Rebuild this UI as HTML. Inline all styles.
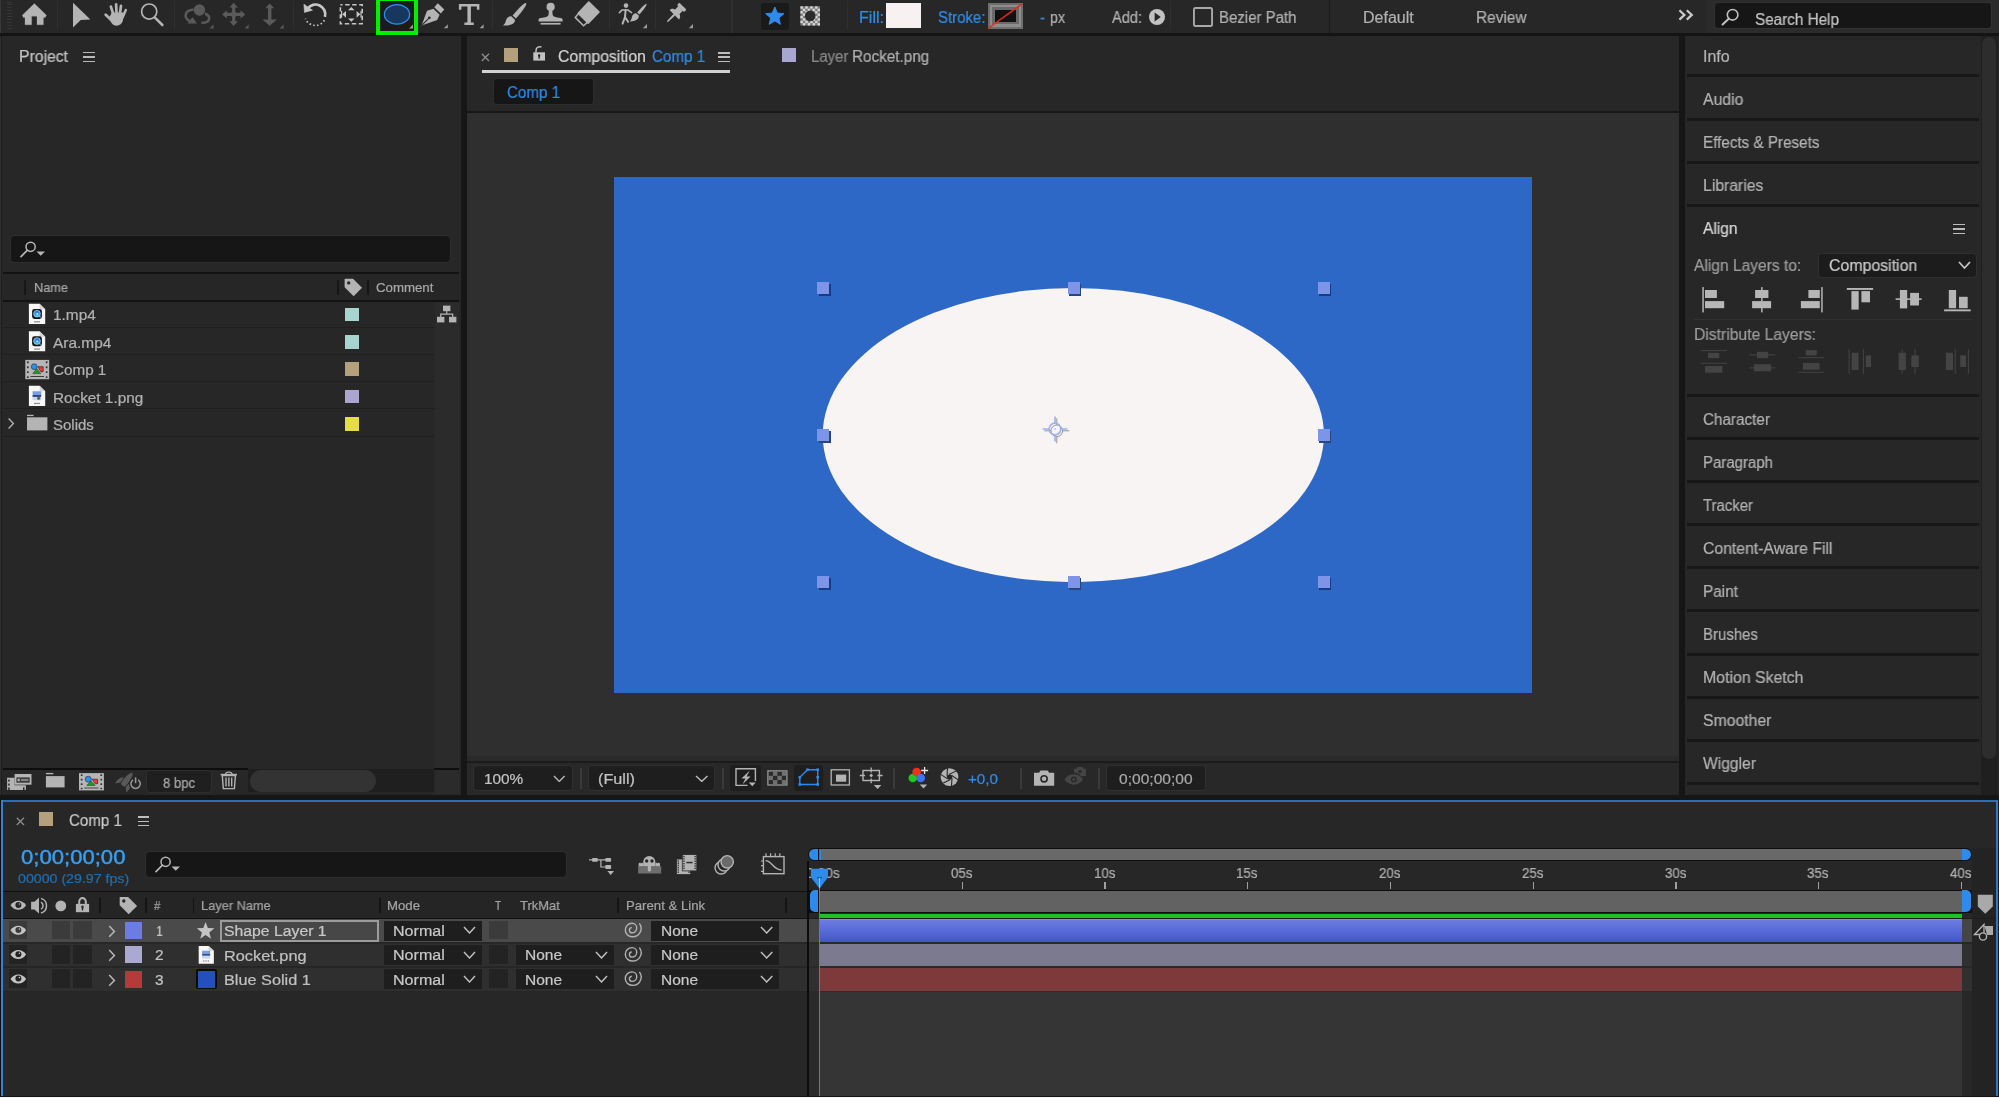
<!DOCTYPE html>
<html><head><meta charset="utf-8"><title>After Effects</title>
<style>
html,body{margin:0;padding:0;background:#161616;}
body{width:1999px;height:1098px;overflow:hidden;position:relative;font-family:"Liberation Sans",sans-serif;}
#r{position:absolute;left:0;top:0;width:1999px;height:1098px;overflow:hidden;background:#161616;}
#r div,#r span,#r svg{position:absolute;}
#r span{white-space:nowrap;line-height:1;transform-origin:0 0;will-change:transform;-webkit-text-stroke:0.22px currentColor;}
</style></head><body><div id="r">
<div style="left:0.00px;top:0.00px;width:1707.00px;height:33.00px;background:#272727;"></div>
<div style="left:1707.00px;top:0.00px;width:292.00px;height:33.00px;background:#2b2b2b;"></div>
<div style="left:0.00px;top:33.00px;width:1999.00px;height:3.00px;background:#141414;"></div>
<div style="left:7.00px;top:1.50px;width:4.50px;height:1.10px;background:#363636;"></div>
<div style="left:7.00px;top:4.40px;width:4.50px;height:1.10px;background:#363636;"></div>
<div style="left:7.00px;top:7.30px;width:4.50px;height:1.10px;background:#363636;"></div>
<div style="left:7.00px;top:10.20px;width:4.50px;height:1.10px;background:#363636;"></div>
<div style="left:7.00px;top:13.10px;width:4.50px;height:1.10px;background:#363636;"></div>
<div style="left:7.00px;top:16.00px;width:4.50px;height:1.10px;background:#363636;"></div>
<div style="left:7.00px;top:18.90px;width:4.50px;height:1.10px;background:#363636;"></div>
<div style="left:7.00px;top:21.80px;width:4.50px;height:1.10px;background:#363636;"></div>
<div style="left:7.00px;top:24.70px;width:4.50px;height:1.10px;background:#363636;"></div>
<div style="left:7.00px;top:27.60px;width:4.50px;height:1.10px;background:#363636;"></div>
<div style="left:57.00px;top:1.00px;width:1.00px;height:29.00px;background:#2f2f2f;"></div>
<div style="left:174.00px;top:1.00px;width:1.00px;height:29.00px;background:#2f2f2f;"></div>
<div style="left:292.50px;top:1.00px;width:1.00px;height:29.00px;background:#2f2f2f;"></div>
<div style="left:491.50px;top:1.00px;width:1.00px;height:29.00px;background:#2f2f2f;"></div>
<div style="left:609.00px;top:1.00px;width:1.00px;height:29.00px;background:#2f2f2f;"></div>
<div style="left:655.00px;top:1.00px;width:1.00px;height:29.00px;background:#2f2f2f;"></div>
<div style="left:847.00px;top:1.00px;width:1.00px;height:29.00px;background:#2f2f2f;"></div>
<div style="left:1170.00px;top:1.00px;width:1.00px;height:29.00px;background:#2f2f2f;"></div>
<div style="left:1329.00px;top:0.00px;width:1.20px;height:33.00px;background:#191919;"></div>
<div style="left:0.00px;top:0.00px;width:1.00px;height:33.00px;background:#383838;"></div>
<div style="left:0.00px;top:36.00px;width:1.00px;height:759.00px;background:#2f2f2f;"></div>
<div style="left:1.00px;top:36.00px;width:1.00px;height:759.00px;background:#1c1c1c;"></div>
<div style="left:2.00px;top:36.00px;width:459.00px;height:758.50px;background:#272727;"></div>
<div style="left:461.00px;top:36.00px;width:6.00px;height:759.00px;background:#161616;"></div>
<div style="left:467.00px;top:36.00px;width:1212.00px;height:74.50px;background:#272727;"></div>
<div style="left:467.00px;top:110.50px;width:1212.00px;height:2.00px;background:#171717;"></div>
<div style="left:467.00px;top:112.50px;width:1212.00px;height:643.50px;background:#2f2f2f;"></div>
<div style="left:467.00px;top:756.00px;width:1212.00px;height:4.50px;background:#2a2a2a;"></div>
<div style="left:467.00px;top:760.50px;width:1212.00px;height:2.00px;background:#1b1b1b;"></div>
<div style="left:467.00px;top:762.50px;width:1212.00px;height:32.00px;background:#282828;"></div>
<div style="left:1679.00px;top:36.00px;width:6.00px;height:759.00px;background:#161616;"></div>
<div style="left:1685.00px;top:36.00px;width:312.00px;height:759.00px;background:#272727;"></div>
<div style="left:1980.60px;top:36.00px;width:17.40px;height:759.00px;background:#1f1f1f;"></div>
<div style="left:1981.70px;top:37.00px;width:14.20px;height:722.00px;background:#2d2d2d;border-radius:7px;"></div>
<div style="left:1998.00px;top:36.00px;width:1.00px;height:759.00px;background:#282828;"></div>
<div style="left:0.00px;top:794.50px;width:1999.00px;height:5.50px;background:#161616;"></div>
<div style="left:0.00px;top:800.00px;width:1999.00px;height:298.00px;background:#272727;"></div>
<svg style="left:481.00px;top:52.50px;" width="9" height="9" viewBox="0 0 9 9"><path d="M0.8 0.8 L8 8 M8 0.8 L0.8 8" stroke="#8c8c8c" stroke-width="1.3" fill="none"/></svg>
<div style="left:503.70px;top:47.70px;width:14.00px;height:14.00px;background:#b4a07c;"></div>
<span style="left:558.40px;top:49.00px;font-size:16px;color:#d4d4d4;transform:scaleX(0.9881);">Composition</span>
<span style="left:651.50px;top:49.00px;font-size:16px;color:#2d8ceb;transform:scaleX(0.9482);">Comp 1</span>
<div style="left:718.40px;top:52.00px;width:11.60px;height:1.50px;background:#bdbdbd;"></div>
<div style="left:718.40px;top:56.30px;width:11.60px;height:1.50px;background:#bdbdbd;"></div>
<div style="left:718.40px;top:60.60px;width:11.60px;height:1.50px;background:#bdbdbd;"></div>
<div style="left:481.60px;top:70.30px;width:248.40px;height:2.50px;background:#d2d2d2;"></div>
<div style="left:781.60px;top:47.70px;width:14.40px;height:14.00px;background:#a9a7d0;"></div>
<span style="left:810.70px;top:49.00px;font-size:16px;color:#8a8a8a;transform:scaleX(0.9325);">Layer</span>
<span style="left:852.40px;top:49.00px;font-size:16px;color:#b0b0b0;transform:scaleX(0.9536);">Rocket.png</span>
<div style="left:494.00px;top:79.40px;width:99.00px;height:24.20px;background:#161616;border-radius:3px;box-shadow:0 0 0 1px #2c2c2c;"></div>
<span style="left:507.00px;top:85.00px;font-size:16px;color:#2d8ceb;transform:scaleX(0.9464);">Comp 1</span>
<div style="left:614.00px;top:176.50px;width:918.00px;height:516.00px;background:#2e68c6;"></div>
<svg style="left:614.00px;top:176.00px;" width="918" height="517" viewBox="0 0 918 517"><ellipse cx="459.3" cy="259.1" rx="250.6" ry="147.1" fill="#f9f4f4"/></svg>
<div style="left:818.50px;top:283.50px;width:12.00px;height:12.00px;background:#173e85;"></div>
<div style="left:817.00px;top:282.00px;width:12.00px;height:12.00px;background:#7e94e8;"></div>
<div style="left:818.50px;top:430.60px;width:12.00px;height:12.00px;background:#27467f;"></div>
<div style="left:817.00px;top:429.10px;width:12.00px;height:12.00px;background:#7e94e8;"></div>
<div style="left:818.50px;top:577.80px;width:12.00px;height:12.00px;background:#173e85;"></div>
<div style="left:817.00px;top:576.30px;width:12.00px;height:12.00px;background:#7e94e8;"></div>
<div style="left:1069.10px;top:283.50px;width:12.00px;height:12.00px;background:#27467f;"></div>
<div style="left:1067.60px;top:282.00px;width:12.00px;height:12.00px;background:#7e94e8;"></div>
<div style="left:1069.10px;top:577.80px;width:12.00px;height:12.00px;background:#27467f;"></div>
<div style="left:1067.60px;top:576.30px;width:12.00px;height:12.00px;background:#7e94e8;"></div>
<div style="left:1319.20px;top:283.50px;width:12.00px;height:12.00px;background:#173e85;"></div>
<div style="left:1317.70px;top:282.00px;width:12.00px;height:12.00px;background:#7e94e8;"></div>
<div style="left:1319.20px;top:430.60px;width:12.00px;height:12.00px;background:#27467f;"></div>
<div style="left:1317.70px;top:429.10px;width:12.00px;height:12.00px;background:#7e94e8;"></div>
<div style="left:1319.20px;top:577.80px;width:12.00px;height:12.00px;background:#173e85;"></div>
<div style="left:1317.70px;top:576.30px;width:12.00px;height:12.00px;background:#7e94e8;"></div>
<svg style="left:1040.00px;top:413.50px;" width="32" height="32" viewBox="0 0 32 32"><g fill="none" stroke-width="1.3"><g stroke="#8a8a8a" stroke-width="0.9" transform="translate(1.8,1.8)"><circle cx="15" cy="15" r="5.8"/><path d="M15 2.5V9.2M15 20.8V27.5M2.5 15H9.2M20.8 15H27.5"/></g><g stroke="#9fb2f2" stroke-width="1.7"><circle cx="15" cy="15" r="5.8"/><path d="M15 2.5V9.2M15 20.8V27.5M2.5 15H9.2M20.8 15H27.5"/></g><circle cx="15" cy="15" r="0.9" fill="#b4c2f5" stroke="none"/></g></svg>
<div style="left:474.40px;top:765.60px;width:97.60px;height:24.40px;background:#1e1e1e;border-radius:3px;box-shadow:0 0 0 1px #303030;"></div>
<span style="left:483.70px;top:771.00px;font-size:15px;color:#c2c2c2;transform:scaleX(1.0234);">100%</span>
<svg style="left:553.40px;top:774.60px;" width="12.600000000000023" height="7.399999999999977" viewBox="0 0 12.600000000000023 7.399999999999977"><path d="M1 1 L6.30 6.40 L11.60 1" stroke="#b8b8b8" stroke-width="1.45" fill="none"/></svg>
<div style="left:580.00px;top:767.50px;width:2.00px;height:21.00px;background:#3a3a3a;"></div>
<div style="left:588.70px;top:765.60px;width:125.00px;height:24.40px;background:#1e1e1e;border-radius:3px;box-shadow:0 0 0 1px #303030;"></div>
<span style="left:598.00px;top:771.00px;font-size:15px;color:#c2c2c2;transform:scaleX(1.0819);">(Full)</span>
<svg style="left:695.00px;top:774.60px;" width="13.5" height="7.399999999999977" viewBox="0 0 13.5 7.399999999999977"><path d="M1 1 L6.75 6.40 L12.50 1" stroke="#b8b8b8" stroke-width="1.45" fill="none"/></svg>
<div style="left:721.50px;top:767.50px;width:2.00px;height:21.00px;background:#3a3a3a;"></div>
<div style="left:730.00px;top:765.00px;width:30.60px;height:25.60px;background:#1e1e1e;border-radius:3px;"></div>
<div style="left:794.40px;top:765.00px;width:28.30px;height:25.60px;background:#1e1e1e;border-radius:3px;"></div>
<div style="left:893.00px;top:767.50px;width:2.00px;height:21.00px;background:#3a3a3a;"></div>
<span style="left:968.30px;top:771.00px;font-size:15px;color:#2d8ceb;transform:scaleX(1.0127);">+0,0</span>
<div style="left:1020.00px;top:767.50px;width:2.00px;height:21.00px;background:#3a3a3a;"></div>
<div style="left:1097.50px;top:767.50px;width:2.00px;height:21.00px;background:#3a3a3a;"></div>
<div style="left:1107.00px;top:765.50px;width:97.70px;height:24.80px;background:#1e1e1e;border-radius:3px;box-shadow:0 0 0 1px #303030;"></div>
<span style="left:1118.80px;top:771.00px;font-size:15px;color:#a8a8a8;transform:scaleX(1.0384);">0;00;00;00</span>
<div style="left:376.00px;top:0.00px;width:42.00px;height:35.30px;background:#00f000;"></div>
<div style="left:380.30px;top:0.50px;width:33.40px;height:30.50px;background:#1b1b1b;"></div>
<svg style="left:380.00px;top:0.00px;" width="34" height="31" viewBox="0 0 34 31"><ellipse cx="17" cy="14.4" rx="12.6" ry="9.8" fill="#17375f" stroke="#2d8ceb" stroke-width="1.3"/><path d="M33 24.5V28.5H29Z" fill="#9a9a9a"/></svg>
<div style="left:761.00px;top:2.70px;width:28.00px;height:27.00px;background:#1a1a1a;border-radius:3px;"></div>
<span style="left:859.00px;top:10.00px;font-size:16px;color:#2d8ceb;transform:scaleX(1.0048);">Fill:</span>
<div style="left:886.00px;top:3.30px;width:34.50px;height:24.70px;background:#f8f1f1;"></div>
<span style="left:938.00px;top:10.00px;font-size:16px;color:#2d8ceb;transform:scaleX(0.9365);">Stroke:</span>
<div style="left:987.70px;top:3.00px;width:35.30px;height:25.50px;background:#6e6e6e;"></div>
<div style="left:989.50px;top:4.80px;width:31.70px;height:21.90px;background:#8e8e8e;"></div>
<div style="left:992.00px;top:7.30px;width:26.70px;height:16.90px;background:#6a6a6a;"></div>
<div style="left:994.50px;top:9.80px;width:21.70px;height:11.90px;background:#111;"></div>
<svg style="left:987.00px;top:2.00px;" width="37" height="28" viewBox="0 0 37 28"><path d="M1 26.5 L35.5 1.5" stroke="#e6281e" stroke-width="1.5"/></svg>
<span style="left:1040.00px;top:10.00px;font-size:16px;color:#2d8ceb;transform:scaleX(0.9328);">-</span>
<span style="left:1050.00px;top:10.00px;font-size:16px;color:#b2b2b2;transform:scaleX(0.8886);">px</span>
<span style="left:1112.00px;top:10.00px;font-size:16px;color:#b2b2b2;transform:scaleX(0.9124);">Add:</span>
<svg style="left:1148.00px;top:8.00px;" width="18" height="18" viewBox="0 0 18 18"><circle cx="9" cy="9" r="8" fill="#c2c2c2"/><path d="M6.6 4.6 L12.8 9 L6.6 13.4Z" fill="#272727"/></svg>
<div style="left:1192.60px;top:7.00px;width:20.40px;height:20.00px;background:transparent;border-radius:2.5px;box-shadow:inset 0 0 0 1.9px #a8a8a8;"></div>
<span style="left:1218.50px;top:10.00px;font-size:16px;color:#b2b2b2;transform:scaleX(0.9369);">Bezier Path</span>
<span style="left:1363.00px;top:10.00px;font-size:16px;color:#b2b2b2;transform:scaleX(0.9937);">Default</span>
<span style="left:1476.00px;top:10.00px;font-size:16px;color:#b2b2b2;transform:scaleX(0.9623);">Review</span>
<svg style="left:1677.00px;top:8.00px;" width="19" height="14" viewBox="0 0 19 14"><path d="M2.4 2.2 L7.4 6.9 L2.4 11.6 M9.8 2.2 L14.8 6.9 L9.8 11.6" stroke="#cacaca" stroke-width="2.2" fill="none"/></svg>
<div style="left:1714.60px;top:3.40px;width:276.00px;height:25.10px;background:#161616;border-radius:3px;box-shadow:0 0 0 1px #323232;"></div>
<svg style="left:1721.00px;top:8.00px;" width="19" height="18" viewBox="0 0 19 18"><circle cx="11.6" cy="6.8" r="5.3" stroke="#c0c0c0" stroke-width="1.6" fill="none"/><path d="M8 10.6 L1.6 16.6" stroke="#c0c0c0" stroke-width="2" stroke-linecap="round"/></svg>
<span style="left:1755.00px;top:12.00px;font-size:16px;color:#c4c4c4;transform:scaleX(0.9537);">Search Help</span>
<span style="left:19.00px;top:49.00px;font-size:16px;color:#c4c4c4;transform:scaleX(0.9847);">Project</span>
<div style="left:83.00px;top:51.50px;width:12.00px;height:1.50px;background:#b8b8b8;"></div>
<div style="left:83.00px;top:56.10px;width:12.00px;height:1.50px;background:#b8b8b8;"></div>
<div style="left:83.00px;top:60.70px;width:12.00px;height:1.50px;background:#b8b8b8;"></div>
<div style="left:11.30px;top:236.30px;width:439.20px;height:26.20px;background:#161616;border-radius:4px;box-shadow:0 0 0 1px #2e2e2e;"></div>
<svg style="left:19.50px;top:240.50px;" width="27" height="17" viewBox="0 0 27 17"><circle cx="10.6" cy="5.8" r="4.6" stroke="#b6b6b6" stroke-width="1.5" fill="none"/><path d="M7.4 9.2 L1 15.6" stroke="#b6b6b6" stroke-width="1.7" stroke-linecap="round"/><path d="M16.5 10.5 H25 L20.75 14.8Z" fill="#b6b6b6"/></svg>
<div style="left:3.00px;top:272.00px;width:456.00px;height:2.00px;background:#121212;"></div>
<div style="left:3.00px;top:274.00px;width:456.00px;height:25.80px;background:#262626;"></div>
<div style="left:3.00px;top:299.80px;width:456.00px;height:1.80px;background:#121212;"></div>
<div style="left:24.00px;top:280.00px;width:2.00px;height:15.00px;background:#161616;"></div>
<div style="left:337.00px;top:280.00px;width:2.00px;height:15.00px;background:#161616;"></div>
<div style="left:367.00px;top:280.00px;width:2.00px;height:15.00px;background:#161616;"></div>
<span style="left:33.50px;top:281.00px;font-size:13px;color:#a8a8a8;transform:scaleX(0.9795);">Name</span>
<span style="left:375.60px;top:281.00px;font-size:13px;color:#a8a8a8;transform:scaleX(1.0185);">Comment</span>
<div style="left:435.00px;top:301.60px;width:24.00px;height:492.90px;background:#2b2b2b;"></div>
<div style="left:3.00px;top:326.50px;width:432.00px;height:1.10px;background:#202020;"></div>
<span style="left:53.30px;top:307.00px;font-size:15px;color:#b2b2b2;transform:scaleX(1.0264);">1.mp4</span>
<div style="left:345.00px;top:307.60px;width:13.80px;height:13.80px;background:#a7d4cf;"></div>
<div style="left:3.00px;top:353.80px;width:432.00px;height:1.10px;background:#202020;"></div>
<span style="left:53.00px;top:335.00px;font-size:15px;color:#b2b2b2;transform:scaleX(1.0282);">Ara.mp4</span>
<div style="left:345.00px;top:334.95px;width:13.80px;height:13.80px;background:#a7d4cf;"></div>
<div style="left:3.00px;top:381.10px;width:432.00px;height:1.10px;background:#202020;"></div>
<span style="left:53.00px;top:362.00px;font-size:15px;color:#b2b2b2;transform:scaleX(1.0152);">Comp 1</span>
<div style="left:345.00px;top:362.30px;width:13.80px;height:13.80px;background:#b4a07c;"></div>
<div style="left:3.00px;top:408.40px;width:432.00px;height:1.10px;background:#202020;"></div>
<span style="left:53.00px;top:390.00px;font-size:15px;color:#b2b2b2;transform:scaleX(1.0201);">Rocket 1.png</span>
<div style="left:345.00px;top:389.65px;width:13.80px;height:13.80px;background:#a9a7d0;"></div>
<div style="left:3.00px;top:435.70px;width:432.00px;height:1.10px;background:#202020;"></div>
<span style="left:53.00px;top:417.00px;font-size:15px;color:#b2b2b2;transform:scaleX(0.9982);">Solids</span>
<div style="left:345.00px;top:417.00px;width:13.80px;height:13.80px;background:#e6dc46;"></div>
<div style="left:3.00px;top:768.00px;width:245.00px;height:2.00px;background:#0e0e0e;"></div>
<div style="left:434.00px;top:768.00px;width:25.00px;height:2.00px;background:#0e0e0e;"></div>
<div style="left:248.00px;top:769.40px;width:186.00px;height:22.60px;background:#1f1f1f;"></div>
<div style="left:249.70px;top:770.00px;width:125.90px;height:21.50px;background:#333333;border-radius:11px;"></div>
<div style="left:147.00px;top:771.00px;width:64.00px;height:21.00px;background:#1f1f1f;border-radius:3px;box-shadow:0 0 0 1px #2e2e2e;"></div>
<span style="left:163.00px;top:776.00px;font-size:14px;color:#ababab;transform:scaleX(0.9349);">8 bpc</span>
<span style="left:1702.60px;top:49.00px;font-size:16px;color:#b2b2b2;transform:scaleX(0.9880);">Info</span>
<div style="left:1686.50px;top:74.40px;width:292.10px;height:3.00px;background:#171717;"></div>
<span style="left:1702.60px;top:92.00px;font-size:16px;color:#b2b2b2;transform:scaleX(0.9863);">Audio</span>
<div style="left:1686.50px;top:117.50px;width:292.10px;height:3.00px;background:#171717;"></div>
<span style="left:1702.60px;top:135.00px;font-size:16px;color:#b2b2b2;transform:scaleX(0.9510);">Effects &amp; Presets</span>
<div style="left:1686.50px;top:160.60px;width:292.10px;height:3.00px;background:#171717;"></div>
<span style="left:1702.60px;top:178.00px;font-size:16px;color:#b2b2b2;transform:scaleX(0.9844);">Libraries</span>
<div style="left:1686.50px;top:203.70px;width:292.10px;height:3.00px;background:#171717;"></div>
<span style="left:1702.50px;top:221.00px;font-size:16px;color:#d6d6d6;transform:scaleX(0.9691);">Align</span>
<div style="left:1953.00px;top:223.80px;width:12.00px;height:1.60px;background:#bdbdbd;"></div>
<div style="left:1953.00px;top:228.20px;width:12.00px;height:1.60px;background:#bdbdbd;"></div>
<div style="left:1953.00px;top:232.60px;width:12.00px;height:1.60px;background:#bdbdbd;"></div>
<span style="left:1694.00px;top:258.00px;font-size:16px;color:#9c9c9c;transform:scaleX(0.9726);">Align Layers to:</span>
<div style="left:1819.30px;top:253.70px;width:156.90px;height:23.30px;background:#1c1c1c;border-radius:3px;box-shadow:0 0 0 1px #2f2f2f;"></div>
<span style="left:1828.70px;top:258.00px;font-size:16px;color:#cacaca;transform:scaleX(0.9926);">Composition</span>
<svg style="left:1957.60px;top:261.00px;" width="14" height="9" viewBox="0 0 14 9"><path d="M1 1 L6.5 7 L12 1" stroke="#c8c8c8" stroke-width="1.7" fill="none"/></svg>
<div style="left:1694.00px;top:319.30px;width:279.00px;height:1.00px;background:#313131;"></div>
<span style="left:1694.00px;top:327.00px;font-size:16px;color:#9c9c9c;transform:scaleX(0.9801);">Distribute Layers:</span>
<div style="left:1686.50px;top:394.20px;width:292.10px;height:3.00px;background:#171717;"></div>
<span style="left:1702.60px;top:412.00px;font-size:16px;color:#b2b2b2;transform:scaleX(0.9524);">Character</span>
<div style="left:1686.50px;top:437.25px;width:292.10px;height:3.00px;background:#171717;"></div>
<span style="left:1702.60px;top:455.00px;font-size:16px;color:#b2b2b2;transform:scaleX(0.9355);">Paragraph</span>
<div style="left:1686.50px;top:480.30px;width:292.10px;height:3.00px;background:#171717;"></div>
<span style="left:1702.60px;top:498.00px;font-size:16px;color:#b2b2b2;transform:scaleX(0.9310);">Tracker</span>
<div style="left:1686.50px;top:523.35px;width:292.10px;height:3.00px;background:#171717;"></div>
<span style="left:1702.60px;top:541.00px;font-size:16px;color:#b2b2b2;transform:scaleX(0.9857);">Content-Aware Fill</span>
<div style="left:1686.50px;top:566.40px;width:292.10px;height:3.00px;background:#171717;"></div>
<span style="left:1702.60px;top:584.00px;font-size:16px;color:#b2b2b2;transform:scaleX(0.9567);">Paint</span>
<div style="left:1686.50px;top:609.45px;width:292.10px;height:3.00px;background:#171717;"></div>
<span style="left:1702.60px;top:627.00px;font-size:16px;color:#b2b2b2;transform:scaleX(0.9349);">Brushes</span>
<div style="left:1686.50px;top:652.50px;width:292.10px;height:3.00px;background:#171717;"></div>
<span style="left:1702.60px;top:670.00px;font-size:16px;color:#b2b2b2;transform:scaleX(0.9905);">Motion Sketch</span>
<div style="left:1686.50px;top:695.55px;width:292.10px;height:3.00px;background:#171717;"></div>
<span style="left:1702.60px;top:713.00px;font-size:16px;color:#b2b2b2;transform:scaleX(0.9862);">Smoother</span>
<div style="left:1686.50px;top:738.60px;width:292.10px;height:3.00px;background:#171717;"></div>
<span style="left:1702.60px;top:756.00px;font-size:16px;color:#b2b2b2;transform:scaleX(0.9753);">Wiggler</span>
<div style="left:1686.50px;top:781.65px;width:292.10px;height:3.00px;background:#171717;"></div>
<svg style="left:16.40px;top:817.00px;" width="9" height="9" viewBox="0 0 9 9"><path d="M0.8 0.8 L8 8 M8 0.8 L0.8 8" stroke="#8c8c8c" stroke-width="1.3" fill="none"/></svg>
<div style="left:38.70px;top:811.90px;width:14.40px;height:13.80px;background:#b4a07c;"></div>
<span style="left:69.10px;top:813.00px;font-size:16px;color:#c8c8c8;transform:scaleX(0.9429);">Comp 1</span>
<div style="left:137.50px;top:816.40px;width:11.90px;height:1.50px;background:#bdbdbd;"></div>
<div style="left:137.50px;top:820.60px;width:11.90px;height:1.50px;background:#bdbdbd;"></div>
<div style="left:137.50px;top:824.80px;width:11.90px;height:1.50px;background:#bdbdbd;"></div>
<span style="left:20.60px;top:848.00px;font-size:19.5px;color:#35a0f5;transform:scaleX(1.1331);-webkit-text-stroke:0.4px #35a0f5;">0;00;00;00</span>
<span style="left:17.50px;top:872.00px;font-size:13px;color:#1f6fb0;transform:scaleX(1.0911);">00000 (29.97 fps)</span>
<div style="left:146.20px;top:851.90px;width:419.80px;height:25.10px;background:#161616;border-radius:4px;box-shadow:0 0 0 1px #2e2e2e;"></div>
<svg style="left:154.50px;top:855.50px;" width="27" height="17" viewBox="0 0 27 17"><circle cx="10.6" cy="5.8" r="4.6" stroke="#b6b6b6" stroke-width="1.5" fill="none"/><path d="M7.4 9.2 L1 15.6" stroke="#b6b6b6" stroke-width="1.7" stroke-linecap="round"/><path d="M16.5 10.5 H25 L20.75 14.8Z" fill="#b6b6b6"/></svg>
<div style="left:3.00px;top:890.50px;width:805.00px;height:1.80px;background:#0f0f0f;"></div>
<div style="left:3.00px;top:892.30px;width:805.00px;height:25.20px;background:#252525;"></div>
<div style="left:3.00px;top:917.50px;width:805.00px;height:1.90px;background:#0f0f0f;"></div>
<div style="left:99.40px;top:898.00px;width:1.50px;height:14.50px;background:#141414;"></div>
<div style="left:145.00px;top:898.00px;width:1.50px;height:14.50px;background:#141414;"></div>
<div style="left:192.50px;top:898.00px;width:1.50px;height:14.50px;background:#141414;"></div>
<div style="left:379.40px;top:898.00px;width:1.50px;height:14.50px;background:#141414;"></div>
<div style="left:617.10px;top:898.00px;width:1.50px;height:14.50px;background:#141414;"></div>
<div style="left:785.20px;top:898.00px;width:1.50px;height:14.50px;background:#141414;"></div>
<span style="left:153.70px;top:900.00px;font-size:12px;color:#a4a4a4;transform:scaleX(0.9459);">#</span>
<span style="left:201.30px;top:899.00px;font-size:13px;color:#a4a4a4;transform:scaleX(0.9847);">Layer Name</span>
<span style="left:387.40px;top:899.00px;font-size:13px;color:#a4a4a4;transform:scaleX(1.0154);">Mode</span>
<span style="left:495.40px;top:899.00px;font-size:13px;color:#a4a4a4;transform:scaleX(0.7692);">T</span>
<span style="left:519.90px;top:899.00px;font-size:13px;color:#a4a4a4;transform:scaleX(0.9956);">TrkMat</span>
<span style="left:625.50px;top:899.00px;font-size:13px;color:#a4a4a4;transform:scaleX(1.0137);">Parent &amp; Link</span>
<div style="left:3.00px;top:919.40px;width:805.00px;height:22.60px;background:#4a4a4a;"></div>
<div style="left:8.70px;top:920.80px;width:18.50px;height:18.60px;background:#3b3b3b;"></div>
<div style="left:51.90px;top:920.80px;width:18.10px;height:18.60px;background:#3b3b3b;"></div>
<div style="left:72.90px;top:920.80px;width:19.00px;height:18.60px;background:#3b3b3b;"></div>
<div style="left:488.90px;top:920.80px;width:18.70px;height:18.60px;background:#3b3b3b;"></div>
<svg style="left:107.50px;top:925.00px;" width="8" height="13" viewBox="0 0 8 13"><path d="M1.2 1 L6.4 6.4 L1.2 11.8" stroke="#b8b8b8" stroke-width="1.5" fill="none"/></svg>
<div style="left:125.00px;top:922.10px;width:17.10px;height:17.00px;background:#6b7de0;"></div>
<span style="left:155.60px;top:923.00px;font-size:15.5px;color:#c4c4c4;transform:scaleX(0.8021);">1</span>
<div style="left:220.00px;top:919.70px;width:158.80px;height:22.10px;background:#474747;box-shadow:inset 0 0 0 2px #9c9c9c;"></div>
<span style="left:223.70px;top:923.00px;font-size:15.5px;color:#c8c8c8;transform:scaleX(1.0176);">Shape Layer 1</span>
<div style="left:384.40px;top:920.80px;width:97.50px;height:19.80px;background:#1e1e1e;"></div>
<span style="left:393.40px;top:923.00px;font-size:15.5px;color:#c8c8c8;transform:scaleX(1.0363);">Normal</span>
<svg style="left:462.90px;top:926.40px;" width="13.0" height="8.0" viewBox="0 0 13.0 8.0"><path d="M1 1 L6.50 7.00 L12.00 1" stroke="#c0c0c0" stroke-width="1.45" fill="none"/></svg>
<div style="left:651.30px;top:920.80px;width:127.80px;height:19.80px;background:#1e1e1e;"></div>
<span style="left:660.50px;top:923.00px;font-size:15.5px;color:#c8c8c8;transform:scaleX(0.9934);">None</span>
<svg style="left:759.70px;top:926.40px;" width="13.299999999999955" height="8.0" viewBox="0 0 13.299999999999955 8.0"><path d="M1 1 L6.65 7.00 L12.30 1" stroke="#c0c0c0" stroke-width="1.45" fill="none"/></svg>
<div style="left:3.00px;top:943.70px;width:805.00px;height:22.60px;background:#2f2f2f;"></div>
<div style="left:3.00px;top:966.30px;width:805.00px;height:1.70px;background:#262626;"></div>
<div style="left:8.70px;top:945.10px;width:18.50px;height:18.60px;background:#232323;"></div>
<div style="left:51.90px;top:945.10px;width:18.10px;height:18.60px;background:#232323;"></div>
<div style="left:72.90px;top:945.10px;width:19.00px;height:18.60px;background:#232323;"></div>
<div style="left:488.90px;top:945.10px;width:18.70px;height:18.60px;background:#232323;"></div>
<svg style="left:107.50px;top:949.30px;" width="8" height="13" viewBox="0 0 8 13"><path d="M1.2 1 L6.4 6.4 L1.2 11.8" stroke="#b8b8b8" stroke-width="1.5" fill="none"/></svg>
<div style="left:125.00px;top:946.40px;width:17.10px;height:17.00px;background:#aaa9d2;"></div>
<span style="left:155.00px;top:947.00px;font-size:15.5px;color:#c4c4c4;transform:scaleX(0.9881);">2</span>
<span style="left:223.70px;top:948.00px;font-size:15.5px;color:#c0c0c0;transform:scaleX(1.0532);">Rocket.png</span>
<div style="left:384.40px;top:945.10px;width:97.50px;height:19.80px;background:#1e1e1e;"></div>
<span style="left:393.40px;top:947.00px;font-size:15.5px;color:#c8c8c8;transform:scaleX(1.0363);">Normal</span>
<svg style="left:462.90px;top:950.70px;" width="13.0" height="8.0" viewBox="0 0 13.0 8.0"><path d="M1 1 L6.50 7.00 L12.00 1" stroke="#c0c0c0" stroke-width="1.45" fill="none"/></svg>
<div style="left:516.40px;top:945.10px;width:97.60px;height:19.80px;background:#1e1e1e;"></div>
<span style="left:525.20px;top:947.00px;font-size:15.5px;color:#c8c8c8;transform:scaleX(0.9934);">None</span>
<svg style="left:595.00px;top:950.70px;" width="13" height="8.0" viewBox="0 0 13 8.0"><path d="M1 1 L6.50 7.00 L12.00 1" stroke="#c0c0c0" stroke-width="1.45" fill="none"/></svg>
<div style="left:651.30px;top:945.10px;width:127.80px;height:19.80px;background:#1e1e1e;"></div>
<span style="left:660.50px;top:947.00px;font-size:15.5px;color:#c8c8c8;transform:scaleX(0.9934);">None</span>
<svg style="left:759.70px;top:950.70px;" width="13.299999999999955" height="8.0" viewBox="0 0 13.299999999999955 8.0"><path d="M1 1 L6.65 7.00 L12.30 1" stroke="#c0c0c0" stroke-width="1.45" fill="none"/></svg>
<div style="left:3.00px;top:968.00px;width:805.00px;height:22.50px;background:#2f2f2f;"></div>
<div style="left:3.00px;top:990.50px;width:805.00px;height:1.70px;background:#262626;"></div>
<div style="left:8.70px;top:969.40px;width:18.50px;height:18.50px;background:#232323;"></div>
<div style="left:51.90px;top:969.40px;width:18.10px;height:18.50px;background:#232323;"></div>
<div style="left:72.90px;top:969.40px;width:19.00px;height:18.50px;background:#232323;"></div>
<div style="left:488.90px;top:969.40px;width:18.70px;height:18.50px;background:#232323;"></div>
<svg style="left:107.50px;top:973.60px;" width="8" height="13" viewBox="0 0 8 13"><path d="M1.2 1 L6.4 6.4 L1.2 11.8" stroke="#b8b8b8" stroke-width="1.5" fill="none"/></svg>
<div style="left:125.00px;top:970.70px;width:17.10px;height:16.90px;background:#b53a3a;"></div>
<span style="left:155.00px;top:972.00px;font-size:15.5px;color:#c4c4c4;transform:scaleX(0.9881);">3</span>
<span style="left:223.70px;top:972.00px;font-size:15.5px;color:#c0c0c0;transform:scaleX(1.0497);">Blue Solid 1</span>
<div style="left:384.40px;top:969.40px;width:97.50px;height:19.70px;background:#1e1e1e;"></div>
<span style="left:393.40px;top:972.00px;font-size:15.5px;color:#c8c8c8;transform:scaleX(1.0363);">Normal</span>
<svg style="left:462.90px;top:975.00px;" width="13.0" height="8.0" viewBox="0 0 13.0 8.0"><path d="M1 1 L6.50 7.00 L12.00 1" stroke="#c0c0c0" stroke-width="1.45" fill="none"/></svg>
<div style="left:516.40px;top:969.40px;width:97.60px;height:19.70px;background:#1e1e1e;"></div>
<span style="left:525.20px;top:972.00px;font-size:15.5px;color:#c8c8c8;transform:scaleX(0.9934);">None</span>
<svg style="left:595.00px;top:975.00px;" width="13" height="8.0" viewBox="0 0 13 8.0"><path d="M1 1 L6.50 7.00 L12.00 1" stroke="#c0c0c0" stroke-width="1.45" fill="none"/></svg>
<div style="left:651.30px;top:969.40px;width:127.80px;height:19.70px;background:#1e1e1e;"></div>
<span style="left:660.50px;top:972.00px;font-size:15.5px;color:#c8c8c8;transform:scaleX(0.9934);">None</span>
<svg style="left:759.70px;top:975.00px;" width="13.299999999999955" height="8.0" viewBox="0 0 13.299999999999955 8.0"><path d="M1 1 L6.65 7.00 L12.30 1" stroke="#c0c0c0" stroke-width="1.45" fill="none"/></svg>
<div style="left:196.20px;top:969.40px;width:20.70px;height:20.00px;background:#0a0a0a;border-radius:2px;"></div>
<div style="left:197.70px;top:970.90px;width:17.70px;height:17.00px;background:#2450bd;"></div>
<div style="left:807.20px;top:861.00px;width:1.60px;height:235.00px;background:#0c0c0c;"></div>
<div style="left:809.00px;top:919.40px;width:11.00px;height:176.60px;background:#2a2a2a;"></div>
<div style="left:820.00px;top:919.40px;width:1142.40px;height:176.60px;background:#353535;"></div>
<div style="left:1962.40px;top:919.40px;width:9.60px;height:176.60px;background:#272727;"></div>
<div style="left:1972.00px;top:848.00px;width:24.00px;height:248.00px;background:#232323;"></div>
<div style="left:808.40px;top:848.30px;width:1164.00px;height:13.10px;background:#0e0e0e;border-radius:7px;"></div>
<div style="left:819.00px;top:849.40px;width:1143.40px;height:11.00px;background:#696969;"></div>
<div style="left:809.40px;top:849.40px;width:9.00px;height:11.00px;background:#2d8ceb;border-radius:6px 0 0 6px;"></div>
<div style="left:1962.40px;top:849.40px;width:9.00px;height:11.00px;background:#2d8ceb;border-radius:0 6px 6px 0;"></div>
<div style="left:819.60px;top:850.00px;width:1.40px;height:10.00px;background:#2d8ceb;"></div>
<div style="left:818.90px;top:882.00px;width:1.20px;height:7.00px;background:#a0a0a0;"></div>
<div style="left:808.7px;top:862px;width:40px;height:22px;overflow:hidden;"><span style="left:-3.2px;top:4px;font-size:14px;color:#b0b0b0;transform:scaleX(0.985);">0:00s</span></div>
<div style="left:961.65px;top:882.00px;width:1.20px;height:7.00px;background:#a0a0a0;"></div>
<span style="left:950.75px;top:866.00px;font-size:14px;color:#b0b0b0;transform:scaleX(0.9539);">05s</span>
<div style="left:1104.40px;top:882.00px;width:1.20px;height:7.00px;background:#a0a0a0;"></div>
<span style="left:1093.50px;top:866.00px;font-size:14px;color:#b0b0b0;transform:scaleX(0.9539);">10s</span>
<div style="left:1247.15px;top:882.00px;width:1.20px;height:7.00px;background:#a0a0a0;"></div>
<span style="left:1236.25px;top:866.00px;font-size:14px;color:#b0b0b0;transform:scaleX(0.9539);">15s</span>
<div style="left:1389.90px;top:882.00px;width:1.20px;height:7.00px;background:#a0a0a0;"></div>
<span style="left:1379.00px;top:866.00px;font-size:14px;color:#b0b0b0;transform:scaleX(0.9539);">20s</span>
<div style="left:1532.65px;top:882.00px;width:1.20px;height:7.00px;background:#a0a0a0;"></div>
<span style="left:1521.75px;top:866.00px;font-size:14px;color:#b0b0b0;transform:scaleX(0.9539);">25s</span>
<div style="left:1675.40px;top:882.00px;width:1.20px;height:7.00px;background:#a0a0a0;"></div>
<span style="left:1664.50px;top:866.00px;font-size:14px;color:#b0b0b0;transform:scaleX(0.9539);">30s</span>
<div style="left:1818.15px;top:882.00px;width:1.20px;height:7.00px;background:#a0a0a0;"></div>
<span style="left:1807.25px;top:866.00px;font-size:14px;color:#b0b0b0;transform:scaleX(0.9539);">35s</span>
<div style="left:1960.90px;top:882.00px;width:1.20px;height:7.00px;background:#a0a0a0;"></div>
<span style="left:1950.00px;top:866.00px;font-size:14px;color:#b0b0b0;transform:scaleX(0.9539);">40s</span>
<div style="left:809.00px;top:889.60px;width:1163.40px;height:23.60px;background:#0e0e0e;"></div>
<div style="left:819.00px;top:890.60px;width:1143.40px;height:21.80px;background:#626262;"></div>
<div style="left:809.90px;top:890.40px;width:7.70px;height:21.80px;background:#2d8ceb;border-radius:5px 0 0 5px;"></div>
<div style="left:1962.40px;top:890.40px;width:8.50px;height:21.80px;background:#2d8ceb;border-radius:0 5px 5px 0;"></div>
<div style="left:820.00px;top:913.60px;width:1142.40px;height:4.00px;background:#1fc11f;"></div>
<div style="left:809.00px;top:917.60px;width:1187.00px;height:1.70px;background:#1c1c1c;"></div>
<div style="left:809.00px;top:919.40px;width:11.00px;height:22.60px;background:#454545;"></div>
<div style="left:1962.40px;top:919.40px;width:9.60px;height:22.60px;background:#454545;"></div>
<div style="left:809.00px;top:943.70px;width:11.00px;height:22.60px;background:#303030;"></div>
<div style="left:1962.40px;top:943.70px;width:9.60px;height:22.60px;background:#303030;"></div>
<div style="left:809.00px;top:968.00px;width:11.00px;height:22.50px;background:#303030;"></div>
<div style="left:1962.40px;top:968.00px;width:9.60px;height:22.50px;background:#303030;"></div>
<div style="left:820.00px;top:919.40px;width:1142.40px;height:22.90px;background:#4f62d2;background:linear-gradient(#8f9bea 0,#6c7ce0 6%,#5a6cd8 45%,#4357c8 100%);"></div>
<div style="left:820.00px;top:942.30px;width:1142.40px;height:1.40px;background:#2a2a2a;"></div>
<div style="left:820.00px;top:943.70px;width:1142.40px;height:22.70px;background:#7b7a8f;"></div>
<div style="left:820.00px;top:966.40px;width:1142.40px;height:1.60px;background:#2a2a2a;"></div>
<div style="left:820.00px;top:968.00px;width:1142.40px;height:22.60px;background:#7e393a;"></div>
<div style="left:820.00px;top:990.60px;width:1142.40px;height:1.40px;background:#2c2c2c;"></div>
<svg style="left:810.00px;top:868.00px;" width="20" height="22" viewBox="0 0 20 22"><path d="M0.9 0.8 H18 V9.2 L9.55 20.6 L0.9 9.2Z" fill="#2d8ceb"/><path d="M7 9.8 H12" stroke="#1c4f86" stroke-width="1.2"/><path d="M9.55 10 V20.4" stroke="#c8c8c8" stroke-width="0.9"/></svg>
<div style="left:818.90px;top:888.40px;width:1.40px;height:208.60px;background:#2d8ceb;"></div>
<svg style="left:1977.00px;top:893.50px;" width="17" height="21" viewBox="0 0 17 21"><path d="M0.8 0.8 H15.8 V12.5 L8.3 19.8 L0.8 12.5Z" fill="#a9a9a9"/></svg>
<svg style="left:1973.00px;top:922.00px;" width="21" height="20" viewBox="0 0 21 20"><path d="M11.5 4 H20 V13 H14" fill="#a9a9a9"/><path d="M1.5 12.5 L11 2.5 V12.5Z" stroke="#b4b4b4" stroke-width="1.3" fill="none"/><circle cx="10" cy="14.5" r="3.6" stroke="#b4b4b4" stroke-width="1.4" fill="#212121"/></svg>
<div style="left:0.00px;top:800.00px;width:1.00px;height:298.00px;background:#101010;"></div>
<div style="left:1.00px;top:800.00px;width:1996.60px;height:1.90px;background:#2a6eba;"></div>
<div style="left:1.00px;top:800.00px;width:2.10px;height:298.00px;background:#2e82dc;"></div>
<div style="left:1995.80px;top:800.00px;width:1.80px;height:298.00px;background:#2b78cc;"></div>
<div style="left:1997.60px;top:795.00px;width:1.40px;height:303.00px;background:#1c1a19;"></div>
<div style="left:0.00px;top:1096.00px;width:1999.00px;height:1.00px;background:#151515;"></div>
<div style="left:0.00px;top:1097.00px;width:1999.00px;height:1.00px;background:#f4f4f4;"></div>
<svg style="left:0;top:0" width="1999" height="1098" viewBox="0 0 1999 1098"><path d="M34.4 3.6 L46.4 15.2 L45.2 17.5 H43.4 V24.8 H37 V16.2 H31.6 V24.8 H25 V17.5 H23.4 L22.3 15.2 Z" fill="#b4b4b4" stroke="#b4b4b4" stroke-width="0.3" stroke-linejoin="round"/><path d="M73 2.8 L90.4 19.5 L80.8 20 L73 27.4 Z" fill="#b4b4b4"/><g stroke="#b4b4b4" stroke-linecap="round" fill="none"><path d="M113.6 15 L110.9 6.6" stroke-width="2.7"/><path d="M116.6 14 L116.1 4.4" stroke-width="2.7"/><path d="M119.8 14.5 L121 5.8" stroke-width="2.7"/><path d="M122.6 17.5 L125.8 10" stroke-width="2.5"/><path d="M111.5 20.3 L105.7 14.8" stroke-width="2.8"/></g><path d="M111.8 12.5 H124 L122.8 21 C121 27 113 27 111 22 L109 18 Z" fill="#b4b4b4"/><circle cx="149.2" cy="11.6" r="7.6" stroke="#b4b4b4" stroke-width="1.7" fill="none"/><path d="M154.9 17.6 L162.4 25" stroke="#b4b4b4" stroke-width="2.5" stroke-linecap="round"/><circle cx="199.4" cy="10" r="5.7" fill="#5a5a5a"/><path d="M193.5 9.6 C184 10.5 183.5 18 190 21.3" stroke="#5a5a5a" stroke-width="2.5" fill="none"/><path d="M187.5 23.4 H197 L192.5 17 Z" fill="#5a5a5a"/><path d="M205 13.5 C211.5 16.5 210.5 23 201.5 22.8" stroke="#5a5a5a" stroke-width="2.5" fill="none"/><path d="M213.5 24.5 V28.5 H209.5Z" fill="#5a5a5a"/><g fill="#5a5a5a"><path d="M232.1 6.4 H235.29999999999998 V22.4 H232.1Z M225.7 12.8 H241.7 V16.0 H225.7Z"/><path d="M233.7 2.8000000000000007 L237.89999999999998 7.6000000000000005 H229.5Z M233.7 26.0 L237.89999999999998 21.2 H229.5Z M222.1 14.4 L226.89999999999998 10.2 V18.6Z M245.29999999999998 14.4 L240.5 10.2 V18.6Z"/><path d="M233.7 10.2 L237.89999999999998 14.4 L233.7 18.6 L229.5 14.4Z"/><path d="M248.6 24.5 V28.5 H244.6Z"/></g><g fill="#5a5a5a"><path d="M269.7 3.4 L274.2 8.2 H271.4 V19.4 H277 L269.7 25.8 L262.4 19.4 H268 V8.2 H265.2Z"/><path d="M283.6 24.5 V28.5 H279.6Z"/></g><path d="M307.55 8.74 A9.7 9.7 0 0 1 324.9 16.8" stroke="#c6c6c6" stroke-width="2.7" fill="none"/><path d="M303.9 4.2 L304.5 12.4 L312.5 10.2Z" fill="#c6c6c6" stroke="#c6c6c6" stroke-width="0.6" stroke-linejoin="round"/><path d="M324.4 20.3 A10.6 10.6 0 0 1 305.4 18.6" stroke="#c6c6c6" stroke-width="1.7" stroke-dasharray="1.5 2.3" fill="none"/><rect x="340.4" y="4.8" width="21.8" height="19" fill="none" stroke="#c6c6c6" stroke-width="1.6" stroke-dasharray="4.4 2.6" stroke-dashoffset="2.2"/><g fill="#c6c6c6"><path d="M351.3 7 L354.6 10.2 H348Z M351.3 21.8 L354.6 18.6 H348Z M342.2 14.3 L346 10.9 V17.7Z M360.4 14.3 L356.6 10.9 V17.7Z"/><rect x="341" y="11" width="1.2" height="6.6"/><rect x="360.4" y="11" width="1.2" height="6.6"/></g><path d="M421.6 25.4 L427 10.8 L433.4 8.8 L439.6 14.8 L437.2 20 Z" fill="#b4b4b4"/><path d="M422.2 24.8 L429 18.2" stroke="#272727" stroke-width="1.1"/><circle cx="429.4" cy="17.8" r="1.3" fill="#272727"/><path d="M434.3 7.2 L437.8 3.2 L444.3 9.5 L440.8 13.5Z" fill="#b4b4b4"/><path d="M447.8 24.3 V28.3 H443.8Z" fill="#9a9a9a"/><path d="M458.9 4 H479.4 V9.8 H476.9 V6.6 H470.9 V22.4 H473.8 V25 H464.4 V22.4 H467.4 V6.6 H461.4 V9.8 H458.9Z" fill="#b4b4b4"/><path d="M483.6 24.3 V28.3 H479.6Z" fill="#9a9a9a"/><path d="M526.2 3 C527.5 5 520 14 515.8 18.6 L512.6 15.6 C516 11 524 2.6 526.2 3Z" fill="#b4b4b4"/><path d="M511.6 16.6 L514.9 19.7 C515.5 24 509 26.2 503 25.4 C506 23.5 505.5 20 507.2 18 C508.4 16.6 510.2 16 511.6 16.6Z" fill="#b4b4b4"/><circle cx="550.6" cy="6.9" r="4.1" fill="#b4b4b4"/><path d="M549 9 H552.2 L552.6 14.5 C553 16.8 556 17.6 560.5 17.9 C562.2 18 562.6 18.8 562.6 19.8 V21.5 H538.6 V19.8 C538.6 18.8 539 18 540.7 17.9 C545.2 17.6 548.2 16.8 548.6 14.5Z" fill="#b4b4b4"/><rect x="540.6" y="22.9" width="20" height="1.7" fill="#b4b4b4"/><path d="M588.8 2 L599 12 L588.2 23.2 L578.2 13.2Z" fill="#b4b4b4" stroke="#b4b4b4" stroke-width="1.6" stroke-linejoin="round"/><path d="M578.6 13.6 L575.2 17.4 L583.6 25.8 L588 21.6" fill="none" stroke="#b4b4b4" stroke-width="1.5" stroke-linejoin="round"/><circle cx="626" cy="5.6" r="2.3" fill="#b4b4b4"/><g stroke="#b4b4b4" fill="none" stroke-linecap="round"><path d="M619.4 12.6 L622 10 H628 L631.6 12.6" stroke-width="1.6"/><path d="M625.6 10 L625 17 L622.6 23.6 M625 17 L628 21.8" stroke-width="2"/></g><path d="M646.6 3.8 C647.4 5.2 642 11.6 639.4 14.6 L637.2 12.6 C639.6 9.4 645.2 3.4 646.6 3.8Z" fill="#b4b4b4"/><path d="M636.4 13.4 L638.8 15.6 C639.4 19.4 634.4 21.8 629.6 21.4 C632.2 19.6 631.4 16.8 633 14.8 C634 13.6 635.4 13 636.4 13.4Z" fill="#b4b4b4"/><path d="M647 24 V28.2 H642.8Z" fill="#9a9a9a"/><g transform="translate(675.4 13.6) rotate(45)" fill="#b4b4b4"><rect x="-5" y="-10.6" width="10" height="3.4" rx="0.8"/><rect x="-3.2" y="-7.6" width="6.4" height="6.6"/><path d="M-6.6 1.6 C-6.6 -1.4 -4 -2.4 -3.2 -2.4 H3.2 C4 -2.4 6.6 -1.4 6.6 1.6Z"/><path d="M-1.2 1.6 H1.2 L0.7 10.8 L0 12 L-0.7 10.8Z"/></g><path d="M693 24 V28.2 H688.8Z" fill="#9a9a9a"/><polygon points="774.80,7.00 777.33,13.12 783.93,13.63 778.89,17.93 780.44,24.37 774.80,20.90 769.16,24.37 770.71,17.93 765.67,13.63 772.27,13.12" fill="#2d8ceb" stroke="#2d8ceb" stroke-width="1" stroke-linejoin="round"/><rect x="800.4" y="6.3" width="19.6" height="19.2" fill="#7c7c7c"/><g fill="#d6d6d6"><rect x="800.40" y="6.30" width="2.45" height="2.4"/><rect x="800.40" y="11.10" width="2.45" height="2.4"/><rect x="800.40" y="15.90" width="2.45" height="2.4"/><rect x="800.40" y="20.70" width="2.45" height="2.4"/><rect x="802.85" y="8.70" width="2.45" height="2.4"/><rect x="802.85" y="13.50" width="2.45" height="2.4"/><rect x="802.85" y="18.30" width="2.45" height="2.4"/><rect x="802.85" y="23.10" width="2.45" height="2.4"/><rect x="805.30" y="6.30" width="2.45" height="2.4"/><rect x="805.30" y="11.10" width="2.45" height="2.4"/><rect x="805.30" y="15.90" width="2.45" height="2.4"/><rect x="805.30" y="20.70" width="2.45" height="2.4"/><rect x="807.75" y="8.70" width="2.45" height="2.4"/><rect x="807.75" y="13.50" width="2.45" height="2.4"/><rect x="807.75" y="18.30" width="2.45" height="2.4"/><rect x="807.75" y="23.10" width="2.45" height="2.4"/><rect x="810.20" y="6.30" width="2.45" height="2.4"/><rect x="810.20" y="11.10" width="2.45" height="2.4"/><rect x="810.20" y="15.90" width="2.45" height="2.4"/><rect x="810.20" y="20.70" width="2.45" height="2.4"/><rect x="812.65" y="8.70" width="2.45" height="2.4"/><rect x="812.65" y="13.50" width="2.45" height="2.4"/><rect x="812.65" y="18.30" width="2.45" height="2.4"/><rect x="812.65" y="23.10" width="2.45" height="2.4"/><rect x="815.10" y="6.30" width="2.45" height="2.4"/><rect x="815.10" y="11.10" width="2.45" height="2.4"/><rect x="815.10" y="15.90" width="2.45" height="2.4"/><rect x="815.10" y="20.70" width="2.45" height="2.4"/><rect x="817.55" y="8.70" width="2.45" height="2.4"/><rect x="817.55" y="13.50" width="2.45" height="2.4"/><rect x="817.55" y="18.30" width="2.45" height="2.4"/><rect x="817.55" y="23.10" width="2.45" height="2.4"/></g><circle cx="810.2" cy="15.9" r="5.3" fill="#2b2b2b"/></svg>
<div style="left:730.50px;top:0.00px;width:2.50px;height:33.00px;background:#2f2f2f;"></div>
<svg style="left:0;top:0" width="1999" height="1098" viewBox="0 0 1999 1098"><rect x="533.3" y="52.3" width="11.7" height="8.3" fill="#c2c2c2"/><path d="M536 52.6 V50.4 C536 47 539.5 46.2 541.4 47" stroke="#c2c2c2" stroke-width="1.5" fill="none"/><path d="M539.15 54.2 C540.6 54.2 540.6 56 539.9 56.8 L539.6 59 H538.7 L538.4 56.8 C537.7 56 537.7 54.2 539.15 54.2Z" fill="#222"/><defs><linearGradient id="qt" x1="0" y1="0" x2="0" y2="1"><stop offset="0" stop-color="#2a62ee"/><stop offset="1" stop-color="#2ad4f6"/></linearGradient></defs><path d="M28.9 303.8 H39.599999999999994 L45.2 309.3 V324.0 H28.9Z" fill="#f7f7f7"/><path d="M39.599999999999994 303.8 V309.3 H45.2Z" fill="#d4d4d4"/><rect x="32.1" y="308.90000000000003" width="9.8" height="10" rx="2.4" fill="#17171a"/><circle cx="37" cy="313.7" r="3.4" fill="url(#qt)" stroke="#cfe0f6" stroke-width="0.6"/><circle cx="37.3" cy="314.0" r="0.9" fill="#d8f0fb"/><path d="M38.6 315.40000000000003 L40.6 317.2" stroke="#8fb4d8" stroke-width="1.2"/><rect x="34" y="321.0" width="6" height="1.5" fill="#a0a0a0"/><path d="M28.9 331.15000000000003 H39.599999999999994 L45.2 336.65000000000003 V351.35 H28.9Z" fill="#f7f7f7"/><path d="M39.599999999999994 331.15000000000003 V336.65000000000003 H45.2Z" fill="#d4d4d4"/><rect x="32.1" y="336.25000000000006" width="9.8" height="10" rx="2.4" fill="#17171a"/><circle cx="37" cy="341.05" r="3.4" fill="url(#qt)" stroke="#cfe0f6" stroke-width="0.6"/><circle cx="37.3" cy="341.35" r="0.9" fill="#d8f0fb"/><path d="M38.6 342.75000000000006 L40.6 344.55" stroke="#8fb4d8" stroke-width="1.2"/><rect x="34" y="348.35" width="6" height="1.5" fill="#a0a0a0"/><rect x="25.3" y="359.9" width="23.9" height="19.3" fill="#b6b6b6"/><rect x="27.00" y="361.30" width="1.70" height="1.90" rx="0.5" fill="#333"/><rect x="45.80" y="361.30" width="1.70" height="1.90" rx="0.5" fill="#333"/><rect x="27.00" y="366.25" width="1.70" height="1.90" rx="0.5" fill="#333"/><rect x="45.80" y="366.25" width="1.70" height="1.90" rx="0.5" fill="#333"/><rect x="27.00" y="371.20" width="1.70" height="1.90" rx="0.5" fill="#333"/><rect x="45.80" y="371.20" width="1.70" height="1.90" rx="0.5" fill="#333"/><rect x="27.00" y="376.15" width="1.70" height="1.90" rx="0.5" fill="#333"/><rect x="45.80" y="376.15" width="1.70" height="1.90" rx="0.5" fill="#333"/><rect x="30.40" y="376.00" width="13.60" height="1.00" fill="#3c3c3c"/><path d="M37.80 366.70 H43.20 V371.70 H40.80Z" fill="#f23a3a" stroke="#2a2a2a" stroke-width="0.7"/><circle cx="34.20" cy="366.70" r="2.90" fill="#2f8ef0" stroke="#2a2a2a" stroke-width="0.6"/><path d="M36.70 368.70 L40.80 373.60 H32.80Z" fill="#14a018" stroke="#2a2a2a" stroke-width="0.5"/><path d="M28.9 385.85 H39.599999999999994 L45.2 391.35 V406.05 H28.9Z" fill="#f7f7f7"/><path d="M39.599999999999994 385.85 V391.35 H45.2Z" fill="#d4d4d4"/><rect x="32.6" y="391.25" width="8.6" height="4.2" fill="#7a9ee6"/><rect x="32.6" y="395.05" width="8.6" height="2" fill="#2b3c78"/><rect x="32.6" y="396.85" width="8.6" height="3.4" fill="#c9d6f2"/><circle cx="38.6" cy="398.25" r="1.6" fill="#333" opacity="0.75"/><rect x="34" y="402.85" width="6" height="1.2" fill="#8c8c8c"/><rect x="27" y="414.8" width="6.6" height="1.3" fill="#b4b4b4"/><rect x="27" y="417.3" width="20.4" height="13.1" fill="#b4b4b4"/><path d="M8.6 418.6 L13.4 423.6 L8.6 428.6" stroke="#b0b0b0" stroke-width="1.4" fill="none"/><g transform="translate(344.6 278.8) scale(1.0)"><path d="M0 0 H8.4 L17.4 9 L9 17.4 L0 8.4Z" fill="#b4b4b4"/><circle cx="4.1" cy="4.1" r="1.7" fill="#272727"/></g><g fill="#b4b4b4"><rect x="443" y="305.6" width="7.4" height="5.6"/><rect x="437" y="316.8" width="7.4" height="5.6"/><rect x="449" y="316.8" width="7.4" height="5.6"/></g><path d="M446.7 311 V314.2 M440.7 317 V314.2 H452.7 V317" stroke="#b4b4b4" stroke-width="1.2" fill="none"/><path d="M7.1 777.8 H14.6 V785.2 H25.9 V790.1 H7.1Z" fill="#b4b4b4"/><rect x="8.2" y="779.6" width="1.5" height="2" fill="#272727"/><rect x="8.2" y="783.6" width="1.5" height="2" fill="#272727"/><rect x="8.2" y="787.4" width="1.5" height="2.7" fill="#272727"/><rect x="23" y="787.4" width="1.5" height="2.7" fill="#272727"/><rect x="14.6" y="774" width="16.9" height="10.7" fill="#b4b4b4"/><rect x="16.4" y="777.4" width="13.3" height="5.3" fill="#3a3a3a"/><rect x="17.6" y="778.8" width="2.2" height="2.4" fill="#b4b4b4"/><rect x="21" y="779.4" width="7.4" height="1.2" fill="#b4b4b4"/><rect x="45.9" y="772.9" width="7.4" height="1.4" fill="#b4b4b4"/><rect x="45.9" y="776.1" width="18.7" height="11.3" fill="#b4b4b4"/><rect x="79" y="773.1" width="24.9" height="17.3" fill="#b6b6b6"/><rect x="80.77" y="774.35" width="1.77" height="1.70" rx="0.5" fill="#333"/><rect x="100.36" y="774.35" width="1.77" height="1.70" rx="0.5" fill="#333"/><rect x="80.77" y="778.79" width="1.77" height="1.70" rx="0.5" fill="#333"/><rect x="100.36" y="778.79" width="1.77" height="1.70" rx="0.5" fill="#333"/><rect x="80.77" y="783.23" width="1.77" height="1.70" rx="0.5" fill="#333"/><rect x="100.36" y="783.23" width="1.77" height="1.70" rx="0.5" fill="#333"/><rect x="80.77" y="787.67" width="1.77" height="1.70" rx="0.5" fill="#333"/><rect x="100.36" y="787.67" width="1.77" height="1.70" rx="0.5" fill="#333"/><rect x="84.31" y="787.53" width="14.17" height="0.90" fill="#3c3c3c"/><path d="M92.02 779.20 H97.65 V783.68 H95.15Z" fill="#f23a3a" stroke="#2a2a2a" stroke-width="0.7"/><circle cx="88.27" cy="779.20" r="3.02" fill="#2f8ef0" stroke="#2a2a2a" stroke-width="0.6"/><path d="M90.88 780.99 L95.15 785.38 H86.81Z" fill="#14a018" stroke="#2a2a2a" stroke-width="0.5"/><g transform="translate(126.5 780.5) rotate(38)" fill="#585858"><path d="M0 -10 C3.4 -6.5 3.4 3 2.4 6.4 H-2.4 C-3.4 3 -3.4 -6.5 0 -10Z"/><path d="M-4 -1 C-7.5 2 -8 6 -7 9.4 L-3.6 5.5Z"/><path d="M4 -1 C7.5 2 8 6 7 9.4 L3.6 5.5Z"/></g><circle cx="135.6" cy="783.7" r="4.7" stroke="#272727" stroke-width="4" fill="#272727"/><path d="M133 779.8 A4.7 4.7 0 1 0 138.2 779.8" stroke="#9a9a9a" stroke-width="1.5" fill="none"/><path d="M135.6 777.4 V783.2" stroke="#9a9a9a" stroke-width="1.5"/><path d="M222.3 775.6 H235.4 L234.4 788.6 H223.3Z" stroke="#b4b4b4" stroke-width="1.4" fill="none"/><path d="M220.6 774.6 H237" stroke="#b4b4b4" stroke-width="1.5"/><path d="M225.6 774 C225.6 771.4 232 771.4 232 774" stroke="#b4b4b4" stroke-width="1.3" fill="none"/><path d="M226 777.6 V786.4 M228.85 777.6 V786.4 M231.7 777.6 V786.4" stroke="#b4b4b4" stroke-width="1.4"/></svg>
<svg style="left:0;top:0" width="1999" height="1098" viewBox="0 0 1999 1098"><path d="M747.5 785.4 H736 V768.8 H755.4 V781" stroke="#b4b4b4" stroke-width="1.4" fill="none"/><path d="M749.8 770.6 L741.4 778.6 H745.4 L742.6 784.2 L750.6 776.6 H746.6Z" fill="#b4b4b4"/><path d="M748.8 782.4 H755.8 L752.3 786.2Z" fill="#b4b4b4"/><rect x="767.9" y="770.9" width="19" height="14.1" fill="#2a2a2a" stroke="#a2a2a2" stroke-width="1.2"/><rect x="768.50" y="775.80" width="4.45" height="4.3" fill="#707070"/><rect x="772.95" y="771.50" width="4.45" height="4.3" fill="#707070"/><rect x="772.95" y="780.10" width="4.45" height="4.3" fill="#707070"/><rect x="777.40" y="775.80" width="4.45" height="4.3" fill="#707070"/><rect x="781.85" y="771.50" width="4.45" height="4.3" fill="#707070"/><rect x="781.85" y="780.10" width="4.45" height="4.3" fill="#707070"/><path d="M807.5 769.7 L817.7 769.7 L817.7 784.5 L799.8 784.5 L799.8 777.3Z" stroke="#2d8ceb" stroke-width="1.4" fill="none"/><rect x="806.2" y="768.4000000000001" width="2.6" height="2.6" fill="#2d8ceb"/><rect x="816.4000000000001" y="768.4000000000001" width="2.6" height="2.6" fill="#2d8ceb"/><rect x="816.4000000000001" y="783.2" width="2.6" height="2.6" fill="#2d8ceb"/><rect x="798.5" y="783.2" width="2.6" height="2.6" fill="#2d8ceb"/><rect x="798.5" y="776.0" width="2.6" height="2.6" fill="#2d8ceb"/><rect x="816.4000000000001" y="776.0" width="2.6" height="2.6" fill="#2d8ceb"/><rect x="831.2" y="769.8" width="18.2" height="15.2" stroke="#b4b4b4" stroke-width="1.3" fill="none"/><rect x="836" y="774.6" width="10.2" height="7.1" fill="#b4b4b4"/><rect x="863" y="770.5" width="16.4" height="10" stroke="#b4b4b4" stroke-width="1.4" fill="none"/><path d="M871.2 767.6 V772.6 M871.2 778.4 V783.2 M859.8 775.5 H865 M877.4 775.5 H882.6" stroke="#b4b4b4" stroke-width="1.3"/><path d="M871.2 773.6 L873 775.5 L871.2 777.4 L869.4 775.5Z" fill="#b4b4b4"/><path d="M873.8 785 H881.4 L877.6 789Z" fill="#b4b4b4"/><circle cx="912.8" cy="778" r="4.3" fill="#1ec81e"/><circle cx="916.6" cy="772" r="4.3" fill="#f2301a"/><circle cx="920.8" cy="778" r="4.3" fill="#3f70f6"/><path d="M924.6 767 V774 M921.1 770.5 H928.1" stroke="#e2e2e2" stroke-width="1.3"/><path d="M919.8 784.5 H927.2 L923.5 788.6Z" fill="#b4b4b4"/><circle cx="949.5" cy="777.1" r="8.9" fill="#b4b4b4"/><circle cx="949.5" cy="777.1" r="2.7" fill="#282828"/><path d="M951.98 777.87 L951.51 786.08" stroke="#282828" stroke-width="1.1"/><path d="M950.08 779.64 L942.73 783.33" stroke="#282828" stroke-width="1.1"/><path d="M947.59 778.87 L940.72 774.36" stroke="#282828" stroke-width="1.1"/><path d="M947.02 776.33 L947.49 768.12" stroke="#282828" stroke-width="1.1"/><path d="M948.92 774.56 L956.27 770.87" stroke="#282828" stroke-width="1.1"/><path d="M951.41 775.33 L958.28 779.84" stroke="#282828" stroke-width="1.1"/><path d="M1034 772.8 H1039 L1040.6 770.4 H1047.6 L1049.2 772.8 H1054.2 V785.8 H1034Z" fill="#b4b4b4"/><circle cx="1044.1" cy="778.8" r="3.9" fill="#282828"/><circle cx="1044.1" cy="778.8" r="2.3" fill="#b4b4b4"/><g fill="#454545"><path d="M1064.4 779.6 C1069 772.6 1078.6 772.6 1083.2 779.6 C1078.6 786.4 1069 786.4 1064.4 779.6Z"/><path d="M1074 768.8 H1076.4 L1077.4 767 H1082.4 L1083.4 768.8 H1086 V776 H1081 C1079 773.4 1076 772.6 1074 772.4Z"/></g><circle cx="1073.8" cy="779.4" r="2.9" fill="#282828"/><circle cx="1073.8" cy="779.4" r="1.5" fill="#454545"/><circle cx="1080" cy="771.6" r="1.7" fill="#282828"/><g fill="#b6b6b6"><rect x="1702.3" y="287.1" width="1.5" height="25.3"/><rect x="1705" y="290" width="11.9" height="8"/><rect x="1705" y="301.1" width="19.2" height="7.1"/><rect x="1761.1" y="287.1" width="1.5" height="25.3"/><rect x="1755.1" y="290" width="13.3" height="8"/><rect x="1752.1" y="301.1" width="19" height="7.1"/><rect x="1821.2" y="287.1" width="1.5" height="25.3"/><rect x="1808.4" y="290" width="11.4" height="8"/><rect x="1800.9" y="301.1" width="18.9" height="7.1"/><rect x="1846.8" y="288" width="26.3" height="1.9"/><rect x="1851.4" y="291.1" width="7.3" height="18.5"/><rect x="1861.4" y="291.1" width="8.6" height="11.2"/><rect x="1895.6" y="298.3" width="26.1" height="1.6"/><rect x="1899.9" y="290" width="7.3" height="18.4"/><rect x="1910.1" y="292.9" width="8.9" height="12.6"/><rect x="1944.1" y="309.4" width="26.6" height="1.9"/><rect x="1948.8" y="290" width="7.3" height="18.2"/><rect x="1959" y="296.8" width="8.7" height="11.4"/></g><g fill="#444444"><rect x="1700.7" y="350.1" width="26.2" height="1"/><rect x="1700.7" y="362.8" width="26.2" height="1"/><rect x="1708" y="352.9" width="11.3" height="5.2"/><rect x="1705" y="366" width="17.3" height="6.7"/><rect x="1749.4" y="354.4" width="25.8" height="1"/><rect x="1749.4" y="367.4" width="25.8" height="1"/><rect x="1757" y="351.8" width="11.1" height="6.3"/><rect x="1754" y="364.2" width="17" height="7.1"/><rect x="1798.2" y="357.2" width="25.8" height="1"/><rect x="1798.2" y="371.8" width="25.8" height="1"/><rect x="1805.7" y="350.1" width="11.1" height="5.3"/><rect x="1803" y="363" width="16.5" height="6.7"/><rect x="1848.6" y="348.8" width="1" height="25"/><rect x="1862.9" y="348.8" width="1" height="25"/><rect x="1851.6" y="352.7" width="6.9" height="17.3"/><rect x="1865.8" y="355.4" width="5.2" height="11.6"/><rect x="1901.6" y="348.8" width="1" height="25"/><rect x="1914.5" y="348.8" width="1" height="25"/><rect x="1898.6" y="352.7" width="7.3" height="17.3"/><rect x="1911.3" y="355.4" width="7.5" height="11.6"/><rect x="1954.7" y="348.8" width="1" height="25"/><rect x="1967.9" y="348.8" width="1" height="25"/><rect x="1945.9" y="352.7" width="7.1" height="17.3"/><rect x="1960.2" y="355.4" width="5.8" height="11.6"/></g></svg>
<svg style="left:0;top:0" width="1999" height="1098" viewBox="0 0 1999 1098"><g fill="#b4b4b4"><rect x="592.1" y="857.9" width="5.6" height="3.9" rx="0.8"/><rect x="605.3" y="857.9" width="5.8" height="3.9" rx="0.8"/><rect x="605.3" y="865" width="5.8" height="3.9" rx="0.8"/><path d="M607.4 871.1 H614 L610.7 875Z"/></g><path d="M589 859.85 H606 M600.9 859.85 V867 H606" stroke="#b4b4b4" stroke-width="1.2" fill="none"/><rect x="638.1" y="866.2" width="23.1" height="7.3" fill="#6e6e6e"/><path d="M643.2 866.2 V862 A6.1 6.1 0 0 1 655.4 862 V866.2Z" fill="#b4b4b4"/><path d="M638.6 866.2 V863.6 L640 862.6 L641 863.6 L642 862.6 L643.2 863.6 V866.2Z M655.4 866.2 V863.6 L656.6 862.6 L657.6 863.6 L658.6 862.6 L660 863.6 V866.2Z" fill="#b4b4b4"/><circle cx="646.7" cy="861" r="1.7" fill="#272727"/><circle cx="652" cy="861" r="1.7" fill="#272727"/><rect x="647.8" y="863" width="3.2" height="8.6" rx="1.6" fill="#b4b4b4"/><rect x="676.6" y="859" width="14" height="15.6" fill="#b4b4b4" stroke="#272727" stroke-width="0.8"/><rect x="677.6" y="860.30" width="1.3" height="1.4" fill="#2a2a2a"/><rect x="688.3000000000001" y="860.30" width="1.3" height="1.4" fill="#2a2a2a"/><rect x="677.6" y="862.53" width="1.3" height="1.4" fill="#2a2a2a"/><rect x="688.3000000000001" y="862.53" width="1.3" height="1.4" fill="#2a2a2a"/><rect x="677.6" y="864.77" width="1.3" height="1.4" fill="#2a2a2a"/><rect x="688.3000000000001" y="864.77" width="1.3" height="1.4" fill="#2a2a2a"/><rect x="677.6" y="867.00" width="1.3" height="1.4" fill="#2a2a2a"/><rect x="688.3000000000001" y="867.00" width="1.3" height="1.4" fill="#2a2a2a"/><rect x="677.6" y="869.23" width="1.3" height="1.4" fill="#2a2a2a"/><rect x="688.3000000000001" y="869.23" width="1.3" height="1.4" fill="#2a2a2a"/><rect x="677.6" y="871.47" width="1.3" height="1.4" fill="#2a2a2a"/><rect x="688.3000000000001" y="871.47" width="1.3" height="1.4" fill="#2a2a2a"/><rect x="682.3" y="854.6" width="14.5" height="16.3" fill="#b4b4b4" stroke="#272727" stroke-width="0.8"/><rect x="683.3" y="855.90" width="1.3" height="1.4" fill="#2a2a2a"/><rect x="694.5" y="855.90" width="1.3" height="1.4" fill="#2a2a2a"/><rect x="683.3" y="858.25" width="1.3" height="1.4" fill="#2a2a2a"/><rect x="694.5" y="858.25" width="1.3" height="1.4" fill="#2a2a2a"/><rect x="683.3" y="860.60" width="1.3" height="1.4" fill="#2a2a2a"/><rect x="694.5" y="860.60" width="1.3" height="1.4" fill="#2a2a2a"/><rect x="683.3" y="862.95" width="1.3" height="1.4" fill="#2a2a2a"/><rect x="694.5" y="862.95" width="1.3" height="1.4" fill="#2a2a2a"/><rect x="683.3" y="865.30" width="1.3" height="1.4" fill="#2a2a2a"/><rect x="694.5" y="865.30" width="1.3" height="1.4" fill="#2a2a2a"/><rect x="683.3" y="867.65" width="1.3" height="1.4" fill="#2a2a2a"/><rect x="694.5" y="867.65" width="1.3" height="1.4" fill="#2a2a2a"/><rect x="686.4" y="861.8" width="6.2" height="1.5" fill="#2a2a2a"/><g stroke="#b4b4b4" stroke-width="1.4"><circle cx="721.2" cy="867.8" r="6.2" fill="#272727"/><circle cx="724.2" cy="864.8" r="6.2" fill="#272727"/><circle cx="727.2" cy="861.8" r="6.2" fill="#6a6a6a"/></g><rect x="763.4" y="856.6" width="20.6" height="17.1" stroke="#b4b4b4" stroke-width="1.4" fill="none"/><path d="M766 853.2 V856.6 M770.6 853.2 V856.6 M775.2 853.2 V856.6 M779.8 853.2 V856.6 M761 861 H763.4 M761 865.6 H763.4 M761 871.4 H763.4" stroke="#b4b4b4" stroke-width="1.2"/><path d="M765.6 860.6 C772 860.6 773 870 781.6 870" stroke="#b4b4b4" stroke-width="1.4" fill="none"/><path d="M10.5 905.3 C14.3 899.3 22.3 899.3 26.1 905.3 C22.3 911.3 14.3 911.3 10.5 905.3Z" fill="#b8b8b8"/><circle cx="18.400000000000002" cy="904.9" r="3" fill="#252525"/><circle cx="19.400000000000002" cy="904.0" r="0.8" fill="#b8b8b8"/><path d="M31.1 901.8 H34.4 L39 897.8 V913.6 L34.4 909.4 H31.1Z" fill="#b4b4b4"/><path d="M41 902.2 A4 4 0 0 1 41 909.2 M41 898.4 A7.6 7.6 0 0 1 41 913" stroke="#b4b4b4" stroke-width="1.5" fill="none"/><circle cx="60.8" cy="905.9" r="5.4" fill="#b4b4b4"/><rect x="75.9" y="903.9" width="13.2" height="8.3" fill="#b4b4b4"/><path d="M79.2 904 V901.6 A3.3 3.6 0 0 1 85.8 901.6 V904" stroke="#b4b4b4" stroke-width="2" fill="none"/><path d="M82.5 905.6 C84 905.6 84 907.4 83.3 908.2 L83 910.6 H82 L81.7 908.2 C81 907.4 81 905.6 82.5 905.6Z" fill="#252525"/><g transform="translate(119.7 896.9) scale(1.0)"><path d="M0 0 H8.4 L17.4 9 L9 17.4 L0 8.4Z" fill="#b4b4b4"/><circle cx="4.1" cy="4.1" r="1.7" fill="#252525"/></g><path d="M10.5 930.3 C14.3 924.3 22.3 924.3 26.1 930.3 C22.3 936.3 14.3 936.3 10.5 930.3Z" fill="#c4c4c4"/><circle cx="18.400000000000002" cy="929.9" r="3" fill="#3b3b3b"/><circle cx="19.400000000000002" cy="929.0" r="0.8" fill="#c4c4c4"/><path d="M631.3 927.7 A2.6 2.6 0 0 0 632 932.8 A4.75 4.75 0 0 0 632 923.3 A6.7 6.7 0 0 0 632 936.7 A8.3 8.3 0 0 0 639.7 923.8" stroke="#b2b2b2" stroke-width="1.4" fill="none" stroke-linecap="round"/><path d="M10.5 954.6 C14.3 948.6 22.3 948.6 26.1 954.6 C22.3 960.6 14.3 960.6 10.5 954.6Z" fill="#c4c4c4"/><circle cx="18.400000000000002" cy="954.2" r="3" fill="#232323"/><circle cx="19.400000000000002" cy="953.3000000000001" r="0.8" fill="#c4c4c4"/><path d="M631.3 952.0 A2.6 2.6 0 0 0 632 957.1 A4.75 4.75 0 0 0 632 947.6 A6.7 6.7 0 0 0 632 961.0 A8.3 8.3 0 0 0 639.7 948.1" stroke="#b2b2b2" stroke-width="1.4" fill="none" stroke-linecap="round"/><path d="M10.5 978.9 C14.3 972.9 22.3 972.9 26.1 978.9 C22.3 984.9 14.3 984.9 10.5 978.9Z" fill="#c4c4c4"/><circle cx="18.400000000000002" cy="978.5" r="3" fill="#232323"/><circle cx="19.400000000000002" cy="977.6" r="0.8" fill="#c4c4c4"/><path d="M631.3 976.3 A2.6 2.6 0 0 0 632 981.4 A4.75 4.75 0 0 0 632 971.9 A6.7 6.7 0 0 0 632 985.3 A8.3 8.3 0 0 0 639.7 972.4" stroke="#b2b2b2" stroke-width="1.4" fill="none" stroke-linecap="round"/><polygon points="205.60,922.00 207.89,928.04 214.35,928.36 209.31,932.41 211.01,938.64 205.60,935.10 200.19,938.64 201.89,932.41 196.85,928.36 203.31,928.04" fill="#c4c4c4"/><g transform="translate(198.7 946) scale(0.93 0.88)"><path d="M0 0 H10.7 L16.3 5.5 V20.2 H0Z" fill="#f7f7f7"/><path d="M10.7 0 V5.5 H16.3Z" fill="#d4d4d4"/><rect x="3.7" y="5.4" width="8.6" height="4.2" fill="#7a9ee6"/><rect x="3.7" y="9.2" width="8.6" height="2" fill="#2b3c78"/><rect x="3.7" y="11" width="8.6" height="3.4" fill="#c9d6f2"/><rect x="5" y="16" width="1" height="2" fill="#888"/><rect x="7.4" y="16" width="1" height="2" fill="#888"/><rect x="9.8" y="16" width="1" height="2" fill="#888"/></g></svg>
</div></body></html>
